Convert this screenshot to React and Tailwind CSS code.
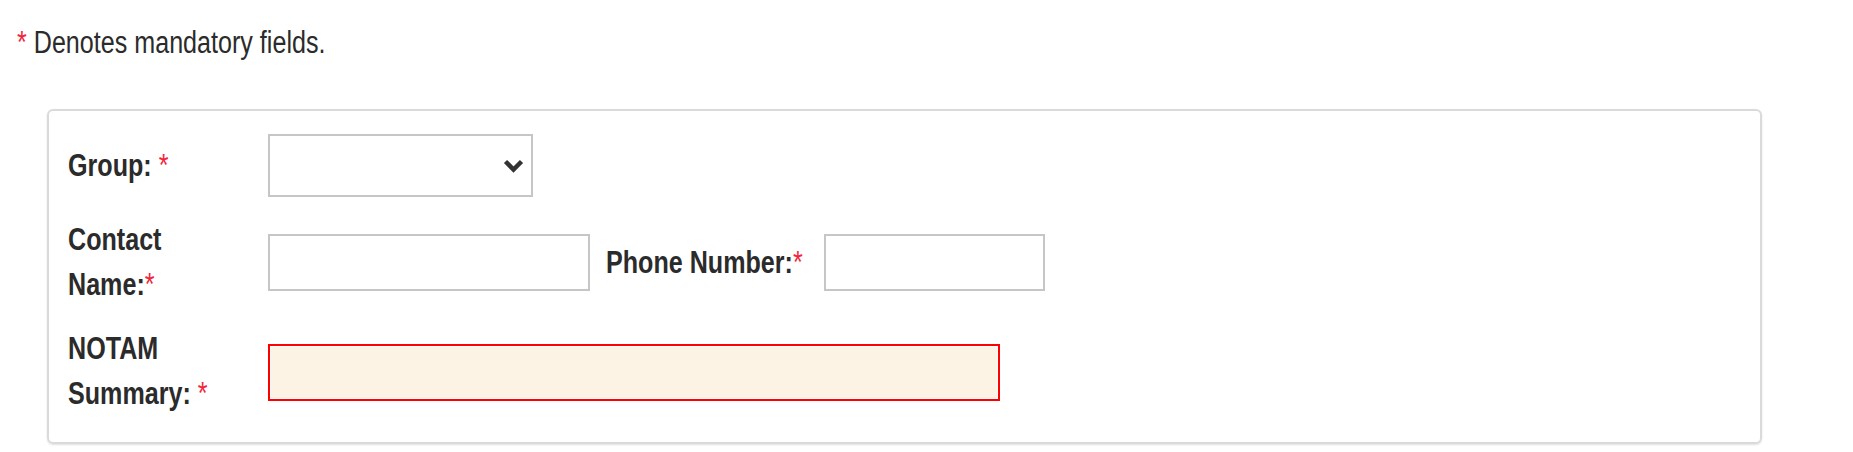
import { useState } from "react";

// Arial Narrow is not installed: squeeze Liberation Sans horizontally instead
const squeeze = "inline-block origin-left scale-x-[0.81] whitespace-nowrap";

function Req({ space = false }) {
  return (
    <span className="text-[#f2243a] font-normal">
      {space ? " " : ""}*
    </span>
  );
}

export default function App() {
  const [group, setGroup] = useState("");
  const [contact, setContact] = useState("");
  const [phone, setPhone] = useState("");
  const [summary, setSummary] = useState("");

  return (
    <div className="font-['Liberation_Sans',Arial,sans-serif] w-[1853px] h-[452px] bg-white text-[#2b2b2b] pt-[20px]">
      {/* Header note */}
      <p className="pl-[17px] text-[31px] leading-[45px]">
        <span className={squeeze}>
          <span className="text-[#f2243a]">*</span> Denotes mandatory fields.
        </span>
      </p>

      {/* Card */}
      <div className="mt-[44px] ml-[47px] w-[1715px] h-[335px] border-2 border-[#dadada] rounded-[6px] shadow-[0_1px_2px_rgba(0,0,0,0.12)] pt-[23px] pb-[26px] pl-[19px] flex flex-col gap-[19px]">
        {/* Group */}
        <div className="flex items-center">
          <label className="w-[200px] text-[31px] leading-[45px] font-bold">
            <span className={squeeze}>
              Group:<Req space />
            </span>
          </label>
          <div className="relative">
            <select
              value={group}
              onChange={(e) => setGroup(e.target.value)}
              className="appearance-none w-[265px] h-[63px] border-2 border-[#c6c6c6] bg-white outline-none"
            >
              <option value=""></option>
            </select>
            <svg
              className="absolute right-[9px] top-1/2 -translate-y-1/2 pointer-events-none"
              width="21"
              height="14"
              viewBox="0 0 21 14"
              fill="none"
            >
              <polyline points="2.5,2.5 10.5,10.5 18.5,2.5" stroke="#333" strokeWidth="4.5" />
            </svg>
          </div>
        </div>

        {/* Contact / Phone */}
        <div className="flex items-center mt-[1px]">
          <label className="w-[200px] text-[31px] leading-[45px] font-bold">
            <span className={squeeze}>
              Contact
              <br />
              Name:<Req />
            </span>
          </label>
          <input
            value={contact}
            onChange={(e) => setContact(e.target.value)}
            className="w-[322px] h-[57px] border-2 border-[#c6c6c6] bg-white outline-none"
          />
          <label className="ml-[16px] w-[218px] text-[31px] leading-[45px] font-bold">
            <span className={squeeze}>
              Phone Number:<Req />
            </span>
          </label>
          <input
            value={phone}
            onChange={(e) => setPhone(e.target.value)}
            className="w-[221px] h-[57px] border-2 border-[#c6c6c6] bg-white outline-none"
          />
        </div>

        {/* NOTAM Summary */}
        <div className="flex items-center">
          <label className="w-[200px] text-[31px] leading-[45px] font-bold">
            <span className={squeeze}>
              NOTAM
              <br />
              Summary:<Req space />
            </span>
          </label>
          <input
            value={summary}
            onChange={(e) => setSummary(e.target.value)}
            className="w-[732px] h-[57px] border-[2.5px] border-[#ff0000] bg-[#fdf3e5] shadow-[inset_0_0_0_1px_#fff] outline-none mt-[3px]"
          />
        </div>
      </div>
    </div>
  );
}
